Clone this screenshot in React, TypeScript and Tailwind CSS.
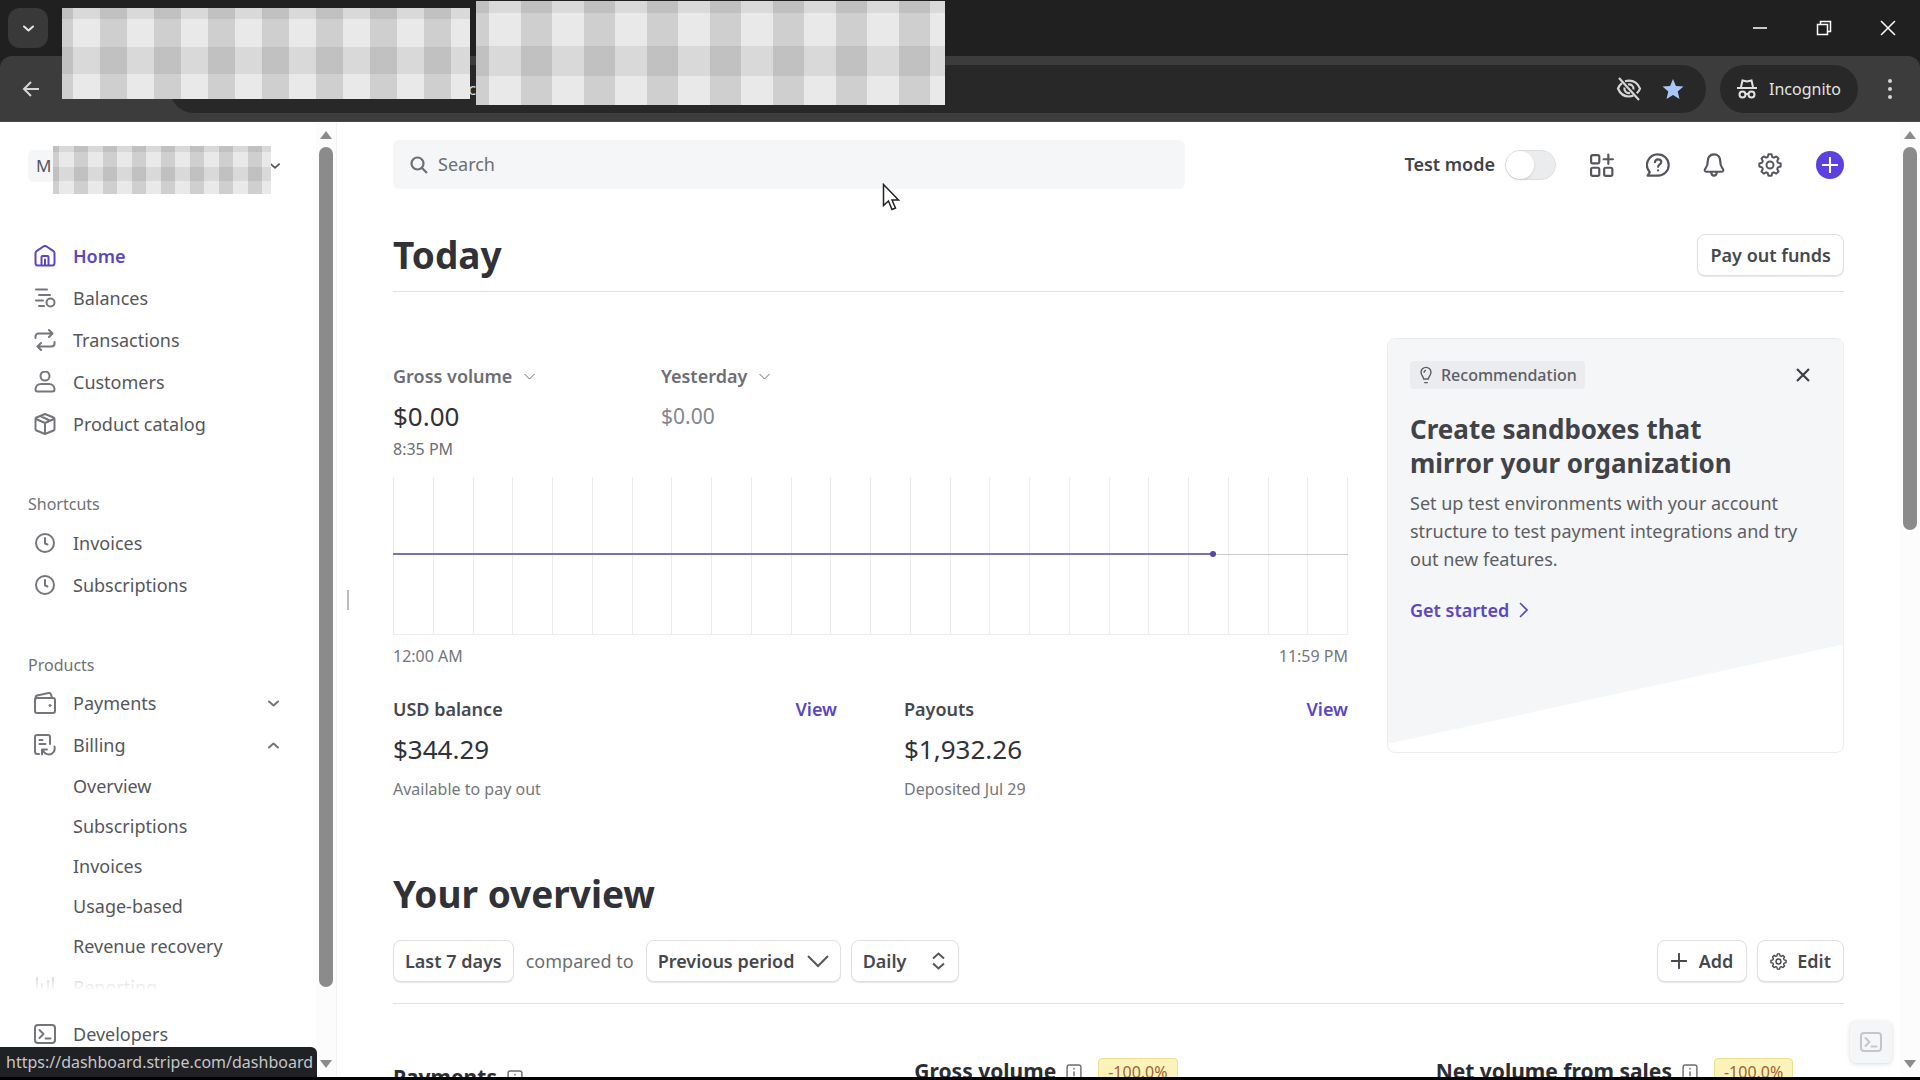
import React, { useState } from 'react';

interface IconProps {
  className?: string;
  children: React.ReactNode;
}

const Icon: React.FC<IconProps> = ({ className = 'size-[22px]', children }) => (
  <svg
    className={`shrink-0 ${className}`}
    viewBox="0 0 22 22"
    fill="none"
    stroke="currentColor"
    strokeWidth="2"
    strokeLinecap="round"
    strokeLinejoin="round"
    aria-hidden="true"
  >
    {children}
  </svg>
);

const HomeIcon = () => (
  <Icon>
    <path d="M1.5 8.2c0-.8.4-1.5 1-2L9.400 1.500a2.800 2.800 0 0 1 3.200 0L19.500 6.200c.6.5 1 1.200 1 2V18a2.500 2.500 0 0 1-2.500 2.500H4A2.500 2.500 0 0 1 1.500 18z" />
    <path d="M7.500 20v-8a1 1 0 0 1 1-1h5a1 1 0 0 1 1 1v8M11 14.500V20" />
  </Icon>
);

const BalancesIcon = () => (
  <Icon>
    <path d="M2 2.500h11M5 8h11M2 13.500h7M5 19h5" />
    <circle cx="16.500" cy="15.500" r="4" />
  </Icon>
);

const TransactionsIcon = () => (
  <Icon>
    <path d="M1.500 9V7.500a3 3 0 0 1 3-3h14M15 1l3.500 3.500L15 8M20.500 13v1.500a3 3 0 0 1-3 3h-14M7 14l-3.500 3.500L7 21" />
  </Icon>
);

const CustomersIcon = () => (
  <Icon>
    <circle cx="11" cy="5" r="4.500" />
    <path d="M1.500 18.500c0-3.500 2.500-5.500 5.500-5.500h8c3 0 5.500 2 5.500 5.500 0 1.200-.8 2-2 2h-15c-1.200 0-2-.8-2-2z" />
  </Icon>
);

const CatalogIcon = () => (
  <Icon>
    <path d="M11 1l8.500 3.500c.6.3 1 .8 1 1.500v10c0 .7-.4 1.200-1 1.500L11 21l-8.500-3.500c-.6-.3-1-.8-1-1.500V6c0-.7.4-1.200 1-1.500zM2 6l9 4 9-4M11 10v11M6.500 3l9 4.500" />
  </Icon>
);

const ClockIcon = () => (
  <Icon>
    <circle cx="11" cy="11" r="9" />
    <path d="M11 6v5.500l2.500 1" />
  </Icon>
);

const WalletIcon = () => (
  <Icon>
    <rect x="1" y="6" width="20" height="15" rx="2" />
    <path d="M1.500 7V5.500c0-1 .6-1.700 1.500-2L14.500 1c1.200-.3 2 .3 2.500 1.500L18 6" />
    <circle cx="16" cy="13.500" r="1" fill="currentColor" strokeWidth="1" />
  </Icon>
);

const BillingIcon = () => (
  <Icon>
    <path d="M5 20H3.500c-1.400 0-2.500-1-2.500-2.500V3c0-1.200.8-2 2-2h11c1.200 0 2 .8 2 2v7M5.500 6h3M5.500 10h6" />
    <path d="M20.500 12.500c1 4-1.500 8-5.500 8-3 0-5-1.500-6-4.500M8 20.500V15.500h5" />
  </Icon>
);

const ReportingIcon = () => (
  <Icon>
    <path d="M3 2v18M8 8v12M14 5v15M19 2v18" />
  </Icon>
);

const TerminalIcon = () => (
  <Icon>
    <rect x="1" y="2" width="20" height="18" rx="3" />
    <path d="M5.500 7l4 4-4 4M11.500 15.500h5" />
  </Icon>
);

const GearIcon: React.FC<{ className?: string }> = ({ className }) => (
  <Icon className={className}>
    <path
      strokeWidth="1.800"
      d="M9.600 1.200h2.800l.7 2.500 1.500.6 2.200-1.200 2 2-1.200 2.200.6 1.500 2.600.8v2.800l-2.600.8-.6 1.500 1.200 2.200-2 2-2.200-1.200-1.500.6-.7 2.500H9.600l-.7-2.500-1.500-.6-2.200 1.200-2-2 1.200-2.200-.6-1.500-2.600-.8V9.600l2.600-.8.6-1.500-1.200-2.200 2-2 2.200 1.200 1.500-.6z"
    />
    <circle cx="11" cy="11" r="3.200" strokeWidth="1.800" />
  </Icon>
);

const InfoIcon = () => (
  <Icon className="size-4 text-[#6c6e74]">
    <rect x="1.500" y="1.500" width="19" height="19" rx="3" />
    <path d="M11 6v1M11 11v5" />
  </Icon>
);

const Chevron: React.FC<{ className?: string; up?: boolean }> = ({ className = 'size-[11px]', up }) => (
  <Icon className={className}>
    <path strokeWidth="4" d={up ? 'M2 15l9-8 9 8' : 'M2 7l9 8 9-8'} />
  </Icon>
);

const ThinChevron: React.FC<{ className: string }> = ({ className }) => (
  <svg className={className} viewBox="0 0 22 14" fill="none" stroke="currentColor" strokeWidth="2" aria-hidden="true">
    <path d="M1 2l10 10L21 2" />
  </svg>
);

// Opaque checker used to cover private details
const Redaction: React.FC<{ className: string; stripes: string }> = ({ className, stripes }) => (
  <div className={`absolute bg-[#e9e9e9] ${className}`}>
    <div
      className={`h-full bg-repeat-x bg-[linear-gradient(90deg,#0000001c_20%,transparent_20%,transparent_71%,#0000001c_71%)] ${stripes}`}
    >
      <div className="h-full bg-[linear-gradient(#00000012_12%,transparent_12%,transparent_43%,#00000012_43%,#00000012_72%,transparent_72%)]" />
    </div>
  </div>
);

const ScrollBar: React.FC<{ thumb: string }> = ({ thumb }) => (
  <div className="flex w-5 shrink-0 flex-col items-center bg-[#fcfcfc] pt-[9px] pb-[9px] text-[#8b8b8b]">
    <svg className="h-2 w-3" viewBox="0 0 12 8" fill="currentColor" aria-hidden="true">
      <path d="M6 0l6 8H0z" />
    </svg>
    <div className="mt-2 min-h-0 w-full flex-1 px-[3px]">
      <div className={`rounded-full bg-[#8b8b8b] ${thumb}`} />
    </div>
    <svg className="h-2 w-3" viewBox="0 0 12 8" fill="currentColor" aria-hidden="true">
      <path d="M0 0h12L6 8z" />
    </svg>
  </div>
);

const BrowserChrome = () => (
  <header className="relative shrink-0 bg-[#202020] text-[#d6d6d6]">
    <div className="flex h-14 items-center pl-2">
      <button className="flex h-10 w-10 items-center justify-center rounded-xl bg-[#393939] text-[#e6e6e6]" aria-label="Search tabs">
        <Chevron />
      </button>
      <div className="ml-auto flex text-white">
        <button className="flex w-16 justify-center" aria-label="Minimize">
          <svg className="size-4" viewBox="0 0 16 16" stroke="currentColor" strokeWidth="1.500"><path d="M1 8h14" /></svg>
        </button>
        <button className="flex w-16 justify-center" aria-label="Restore">
          <svg className="size-4" viewBox="0 0 16 16" fill="none" stroke="currentColor" strokeWidth="1.500">
            <path d="M1.500 4.500h10v10h-10zM4.500 4V1.500h10v10H12" />
          </svg>
        </button>
        <button className="flex w-16 justify-center" aria-label="Close">
          <svg className="size-4" viewBox="0 0 16 16" stroke="currentColor" strokeWidth="1.500"><path d="M1 1l14 14M15 1L1 15" /></svg>
        </button>
      </div>
    </div>
    <div className="flex h-[66px] items-center rounded-t-xl border-b border-[#4a4a4a] bg-[#3c3c3c] pr-5 pl-[22px]">
      <button aria-label="Back">
        <svg className="size-[18px]" viewBox="0 0 18 18" fill="none" stroke="currentColor" strokeWidth="2"><path d="M17 9H2M9 2L2 9l7 7" /></svg>
      </button>
      <div className="ml-[130px] flex h-12 flex-1 items-center justify-end gap-5 rounded-full bg-[#282828] pr-[22px]">
        <svg className="size-[26px]" viewBox="0 0 26 26" fill="none" stroke="currentColor" strokeWidth="2.200" aria-hidden="true">
          <path d="M9 5.300a12 12 0 0 1 4-.7c5 0 9 3 11 8a13 13 0 0 1-3.300 4.700M17.500 19.600A12 12 0 0 1 13 20.500c-5 0-9-3-11-8a13 13 0 0 1 4-5.300" />
          <path d="M12 8.500a4.500 4.500 0 0 1 5.500 5M14 17a4.500 4.500 0 0 1-5.500-5.500M3 2l20 22" />
        </svg>
        <svg className="size-[22px] text-[#a8c7fa]" viewBox="0 0 22 22" fill="currentColor" aria-hidden="true">
          <path d="M11 1l2.900 7 7.600.6-5.800 4.900 1.800 7.400L11 17l-6.500 3.900 1.800-7.400L.5 8.600 8.100 8z" />
        </svg>
      </div>
      <div className="ml-[14px] flex h-12 w-[138px] items-center justify-center gap-3 rounded-full bg-[#282828] text-[16px] text-[#e3e3e3]">
        <svg className="size-5 shrink-0" viewBox="0 0 20 20" fill="none" stroke="currentColor" strokeWidth="2" aria-hidden="true">
          <path d="M0 9h20M4 8l1.500-6.500L10 2.500l4.500-1L16 8" />
          <circle cx="5.500" cy="15.500" r="3" />
          <circle cx="14.500" cy="15.500" r="3" />
          <path d="M8.500 15h3" />
        </svg>
        Incognito
      </div>
      <button className="ml-[22px] flex w-5 justify-center" aria-label="Browser menu">
        <svg className="h-[22px] w-1" viewBox="0 0 4 22" fill="currentColor">
          <circle cx="2" cy="3" r="2" />
          <circle cx="2" cy="11" r="2" />
          <circle cx="2" cy="19" r="2" />
        </svg>
      </button>
    </div>
    <span className="absolute top-[77px] left-[468px] text-[17px] leading-6">c</span>
    <Redaction className="top-2 left-[62px] h-[91px] w-[408px]" stripes="bg-size-[54px_100%]" />
    <Redaction className="top-px left-[476px] h-[104px] w-[469px]" stripes="bg-size-[63px_100%]" />
  </header>
);

const mainLinks = [
  { label: 'Home', icon: <HomeIcon />, active: true },
  { label: 'Balances', icon: <BalancesIcon /> },
  { label: 'Transactions', icon: <TransactionsIcon /> },
  { label: 'Customers', icon: <CustomersIcon /> },
  { label: 'Product catalog', icon: <CatalogIcon /> },
];

const billingLinks = ['Overview', 'Subscriptions', 'Invoices', 'Usage-based', 'Revenue recovery'];

interface NavRowProps {
  label: string;
  icon: React.ReactNode;
  active?: boolean;
}

const NavRow: React.FC<NavRowProps> = ({ label, icon, active }) => (
  <a
    href="#"
    className={`flex h-[42px] items-center gap-[17px] pl-[34px] ${active ? 'font-semibold text-[#5b46c4]' : 'text-[#55565c]'}`}
  >
    <span className={active ? '' : 'text-[#74767c]'}>{icon}</span>
    {label}
  </a>
);

const NavGroup: React.FC<NavRowProps & { open: boolean; onToggle: () => void }> = ({ label, icon, open, onToggle }) => (
  <button
    onClick={onToggle}
    aria-expanded={open}
    className="flex h-[42px] w-full items-center gap-[17px] pr-[37px] pl-[34px] text-[#55565c]"
  >
    <span className="text-[#74767c]">{icon}</span>
    {label}
    <span className="ml-auto text-[#74767c]">
      <Chevron up={open} />
    </span>
  </button>
);

const Sidebar = () => {
  const [paymentsOpen, setPaymentsOpen] = useState(false);
  const [billingOpen, setBillingOpen] = useState(true);

  return (
    <aside className="flex w-[337px] shrink-0 border-r border-[#f3f3f3] text-[18px]">
      <div className="flex min-w-0 flex-1 flex-col">
        <div className="relative mt-7 ml-7 h-8">
          <button className="flex h-8 w-[252px] items-center justify-between text-[#55565c]">
            <span className="flex h-8 w-7 items-center rounded-md bg-[#f5f6f8] pl-2 text-[17px]">M</span>
            <Chevron className="size-[10px]" />
          </button>
          <Redaction className="-top-1 left-[25px] h-[48px] w-[218px]" stripes="bg-size-[29px_100%]" />
        </div>
        <nav className="relative min-h-0 flex-1 overflow-hidden pt-[53px]">
          {mainLinks.map((link) => (
            <NavRow key={link.label} {...link} />
          ))}
          <h2 className="mt-[46px] flex h-[26px] items-center pl-7 text-[16px] text-[#6f7177]">Shortcuts</h2>
          <div className="mt-[5px]">
            <NavRow label="Invoices" icon={<ClockIcon />} />
            <NavRow label="Subscriptions" icon={<ClockIcon />} />
          </div>
          <h2 className="mt-[46px] flex h-[26px] items-center pl-7 text-[16px] text-[#6f7177]">Products</h2>
          <div className="mt-1">
            <NavGroup label="Payments" icon={<WalletIcon />} open={paymentsOpen} onToggle={() => setPaymentsOpen(!paymentsOpen)} />
            <NavGroup label="Billing" icon={<BillingIcon />} open={billingOpen} onToggle={() => setBillingOpen(!billingOpen)} />
            {billingOpen &&
              billingLinks.map((label) => (
                <a key={label} href="#" className="flex h-10 items-center pl-[73px] text-[#55565c]">
                  {label}
                </a>
              ))}
            <NavRow label="Reporting" icon={<ReportingIcon />} />
          </div>
          <div className="absolute inset-x-0 bottom-0 h-14 bg-linear-to-b from-white/30 to-white to-60%" />
        </nav>
        <div className="shrink-0 pb-[22px]">
          <NavRow label="Developers" icon={<TerminalIcon />} />
        </div>
      </div>
      <ScrollBar thumb="h-[92%]" />
    </aside>
  );
};

const TopBar = () => (
  <div className="flex items-center justify-between pt-[18px]">
    <label className="flex h-[49px] w-[792px] items-center gap-[10px] rounded-md bg-[#f5f6f8] px-[17px] text-[#6c6e74]">
      <svg className="size-[18px] shrink-0" viewBox="0 0 18 18" fill="none" stroke="currentColor" strokeWidth="2.200" aria-hidden="true">
        <circle cx="7.500" cy="7.500" r="6" />
        <path d="M12 12l5 5" />
      </svg>
      <input type="text" aria-label="Search" placeholder="Search" className="w-full bg-transparent text-[18px] outline-none placeholder:text-[#6c6e74]" />
    </label>
    <div className="flex items-center text-[#55565c]">
      <label className="flex items-center gap-[10px] text-[18px] font-semibold text-[#414349]">
        Test mode
        <input
          type="checkbox"
          role="switch"
          className="h-[30px] w-[51px] appearance-none rounded-full border border-[#dddee1] bg-[#ebecee] before:block before:size-7 before:rounded-full before:bg-white before:shadow-sm"
        />
      </label>
      <button className="ml-[34px]" aria-label="Apps">
        <Icon className="size-6">
          <rect x="1" y="2" width="7.500" height="7.500" rx="1.500" />
          <rect x="1" y="13.500" width="7.500" height="7.500" rx="1.500" />
          <rect x="13" y="13.500" width="7.500" height="7.500" rx="1.500" />
          <path d="M12.500 5.700h8.500M16.800 1.500v8.500" />
        </Icon>
      </button>
      <button className="ml-8" aria-label="Help">
        <Icon className="size-6">
          <path d="M11 1.200a9.800 9.800 0 1 1 0 19.600H1.500l2-3.200A9.800 9.800 0 0 1 11 1.200z" />
          <path d="M8.200 8.300c.2-1.500 1.300-2.500 2.900-2.500 1.700 0 2.900 1 2.900 2.500 0 2.200-2.900 2-2.900 4.400M11.100 15.800v.2" />
        </Icon>
      </button>
      <button className="ml-8" aria-label="Notifications">
        <Icon className="size-6">
          <path d="M11 1.200c-3.600 0-5.700 2.600-5.700 6.200 0 3-.5 4.600-1.800 6.200-.8 1-1.200 1.600-1 2.500.2.800.8 1.100 1.700 1.100h13.600c.9 0 1.500-.3 1.700-1.100.2-.9-.2-1.500-1-2.500-1.300-1.600-1.800-3.200-1.800-6.200 0-3.600-2.100-6.200-5.700-6.200zM8.500 17.500c0 4.400 5 4.400 5 0" />
        </Icon>
      </button>
      <button className="ml-8" aria-label="Settings">
        <GearIcon className="size-6" />
      </button>
      <button className="ml-[34px] flex size-7 items-center justify-center rounded-full bg-[#5b42e0] text-white" aria-label="Create">
        <Icon className="size-4">
          <path strokeWidth="2.800" d="M1 11h20M11 1v20" />
        </Icon>
      </button>
    </div>
  </div>
);

const buttonClass =
  'flex h-[42px] items-center rounded-lg border border-[#dfe0e3] bg-white text-[18px] font-semibold text-[#46484e] shadow-[0_1px_1px_#0000001a]';

const InlineSelect: React.FC<{ label: string; value: string }> = ({ label, value }) => (
  <span className="relative inline-flex h-7 items-center text-[#6c6e74]">
    <select aria-label={label} className="appearance-none bg-transparent pr-[22px] text-[18px] font-semibold outline-none">
      <option>{value}</option>
    </select>
    <ThinChevron className="pointer-events-none absolute right-0 h-[7px] w-[11px]" />
  </span>
);

// Hour marks across the day, 24 columns
const hours = Array.from({ length: 24 }, (_, i) => i);

const VolumeChart = () => (
  <div className="relative mt-[15px] h-[158px]">
    <div className="grid h-full grid-cols-24 border-r border-b border-[#ececee]">
      {hours.map((hour) => (
        <div key={hour} className="border-l border-[#ececee]" />
      ))}
    </div>
    <div className="absolute inset-x-0 top-[77px] h-px bg-[#c9cacd]" />
    <div className="absolute top-[76px] left-0 h-[2px] w-[86%] bg-[#7a70b4]" />
    <div className="absolute top-[74px] left-[86%] -ml-1 size-[6px] rounded-full bg-[#5547a5]" />
  </div>
);

const Balance: React.FC<{ title: string; amount: string; note: string }> = ({ title, amount, note }) => (
  <div>
    <div className="flex h-7 items-center justify-between text-[18px] font-semibold">
      <h3 className="text-[#46484e]">{title}</h3>
      <a href="#" className="text-[#5b46c4]">View</a>
    </div>
    <p className="mt-[6px] text-[26px] leading-10 text-[#303238]">{amount}</p>
    <p className="mt-[7px] text-[16px] leading-[26px] text-[#74767c]">{note}</p>
  </div>
);

const Recommendation = () => (
  <section className="relative h-[415px] overflow-hidden rounded-lg border border-[#ebecef] bg-white">
    <div className="absolute inset-0 bg-[#f5f6f8] [clip-path:polygon(0_0,100%_0,100%_74%,0_98%)]" />
    <div className="relative pt-[22px] pr-6 pl-[22px]">
      <div className="flex h-7 items-center justify-between">
        <span className="flex h-7 items-center gap-[7px] rounded bg-[#ebecef] px-2 text-[16px] font-medium text-[#5c5e64]">
          <svg className="h-[18px] w-4" viewBox="0 0 16 20" fill="none" stroke="currentColor" strokeWidth="1.600" aria-hidden="true">
            <path d="M5.500 14.500C5 11.500 2.500 10.500 2.500 7a5.500 5.500 0 0 1 11 0c0 3.500-2.500 4.500-3 7.500zM6 18.500h4M6 7.500a2 2 0 0 1 2-2.500" />
          </svg>
          Recommendation
        </span>
        <button className="flex size-8 items-center justify-center text-[#3c3e44]" aria-label="Dismiss">
          <svg className="size-[14px]" viewBox="0 0 14 14" stroke="currentColor" strokeWidth="2.200"><path d="M1 1l12 12M13 1L1 13" /></svg>
        </button>
      </div>
      <h2 className="mt-[23px] max-w-[360px] text-[26px] leading-[34px] font-bold text-[#414349]">Create sandboxes that mirror your organization</h2>
      <p className="mt-[9px] text-[18px] leading-7 text-[#5c5e64]">
        Set up test environments with your account structure to test payment integrations and try out new features.
      </p>
      <a href="#" className="mt-[23px] flex h-7 items-center gap-[10px] text-[18px] font-semibold text-[#5b46c4]">
        Get started
        <svg className="h-4 w-[9px]" viewBox="0 0 9 16" fill="none" stroke="currentColor" strokeWidth="1.600" aria-hidden="true">
          <path d="M1 1l7 7-7 7" />
        </svg>
      </a>
    </div>
  </section>
);

const Metric: React.FC<{ title: string; change?: string }> = ({ title, change }) => (
  <div className={`flex h-7 items-center gap-[10px] ${change ? '' : 'mt-[6px]'}`}>
    <h3 className="text-[21px] font-bold text-[#2c2e34]">{title}</h3>
    <InfoIcon />
    {change && (
      <span className="ml-[6px] flex h-7 items-center rounded border border-[#f0e08e] bg-[#fcf3ba] px-[9px] text-[16px] text-[#a3622e]">
        {change}
      </span>
    )}
  </div>
);

const Dashboard = () => (
  <main className="relative min-w-0 flex-1 overflow-hidden px-14">
    <TopBar />

    <div className="mt-[45px] flex items-center justify-between border-b border-[#dfe0e3] pb-[15px]">
      <h1 className="text-[37px] leading-[42px] font-bold text-[#303238]">Today</h1>
      <button className={`${buttonClass} px-3`}>Pay out funds</button>
    </div>

    <div className="mt-[46px] flex gap-[39px]">
      <div className="min-w-0 flex-1 pt-6">
        <div className="flex">
          <div className="w-[268px]">
            <InlineSelect label="Metric" value="Gross volume" />
            <p className="mt-[6px] text-[26px] leading-10 text-[#303238]">$0.00</p>
          </div>
          <div>
            <InlineSelect label="Comparison day" value="Yesterday" />
            <p className="mt-[6px] text-[21px] leading-10 text-[#84868c]">$0.00</p>
          </div>
        </div>
        <p className="text-[16px] leading-[26px] text-[#6c6e74]">8:35 PM</p>
        <VolumeChart />
        <div className="mt-2 flex justify-between text-[16px] leading-[26px] text-[#74767c]">
          <span>12:00 AM</span>
          <span>11:59 PM</span>
        </div>
        <div className="mt-[26px] grid grid-cols-2 gap-[67px]">
          <Balance title="USD balance" amount="$344.29" note="Available to pay out" />
          <Balance title="Payouts" amount="$1,932.26" note="Deposited Jul 29" />
        </div>
      </div>
      <div className="w-[457px] shrink-0">
        <Recommendation />
      </div>
    </div>

    <h2 className="mt-[68px] text-[37px] leading-[48px] font-bold text-[#303238]">Your overview</h2>
    <div className="mt-[22px] flex items-center border-b border-[#dfe0e3] pb-[21px]">
      <button className={`${buttonClass} px-[11px]`}>Last 7 days</button>
      <span className="px-3 text-[18px] text-[#6c6e74]">compared to</span>
      <div className="relative flex items-center text-[#55565c]">
        <select aria-label="Comparison period" className={`${buttonClass} w-[195px] appearance-none pl-[11px]`}>
          <option>Previous period</option>
        </select>
        <ThinChevron className="pointer-events-none absolute right-3 h-[14px] w-[22px]" />
      </div>
      <div className="relative ml-[10px] flex items-center text-[#55565c]">
        <select aria-label="Interval" className={`${buttonClass} w-[108px] appearance-none pl-[11px]`}>
          <option>Daily</option>
        </select>
        <svg className="pointer-events-none absolute right-[14px] h-[18px] w-[13px]" viewBox="0 0 13 18" fill="none" stroke="currentColor" strokeWidth="2" aria-hidden="true">
          <path d="M1 6.500l5.500-5 5.500 5M1 11.500l5.500 5 5.500-5" />
        </svg>
      </div>
      <button className={`${buttonClass} ml-auto gap-3 px-[13px]`}>
        <Icon className="size-4">
          <path strokeWidth="2.600" d="M1 11h20M11 1v20" />
        </Icon>
        Add
      </button>
      <button className={`${buttonClass} ml-[10px] gap-[10px] px-3`}>
        <GearIcon className="size-[17px]" />
        Edit
      </button>
    </div>
    <div className="mt-[54px] grid grid-cols-3 gap-[113px] whitespace-nowrap">
      <Metric title="Payments" />
      <Metric title="Gross volume" change="-100.0%" />
      <Metric title="Net volume from sales" change="-100.0%" />
    </div>

    <button
      className="absolute right-2 bottom-[14px] flex size-[42px] items-center justify-center rounded-md bg-[#f5f6f8] text-[#c3c6cc] shadow-[0_1px_4px_#00000026]"
      aria-label="Open shell"
    >
      <TerminalIcon />
    </button>
  </main>
);

const App = () => (
  <div className="relative flex h-screen flex-col overflow-hidden border-b-[3px] border-black bg-white font-['Noto_Sans',sans-serif]">
    <BrowserChrome />
    <div className="relative flex min-h-0 flex-1">
      <Sidebar />
      <div className="-mr-5 flex w-5 shrink-0 items-center pl-[10px]">
        <div className="h-5 w-[2px] bg-[#bcbcbc]" />
      </div>
      <Dashboard />
      <ScrollBar thumb="h-[42%]" />
      <div className="absolute bottom-0 left-0 flex h-[30px] w-[317px] items-center rounded-tr-md bg-[#202124] pl-[6px] text-[16px] text-[#c4c6ca]">
        https://dashboard.stripe.com/dashboard
      </div>
    </div>
    <svg className="pointer-events-none absolute top-[183px] left-[882px] h-[28px] w-[18px]" viewBox="0 0 18 28" aria-hidden="true">
      <path d="M1.500 1.500v21l5-4.500 3.500 8.500 3.500-1.500-3.500-8h6.500z" fill="#fff" stroke="#222" strokeWidth="1.500" />
    </svg>
  </div>
);

export default App;
